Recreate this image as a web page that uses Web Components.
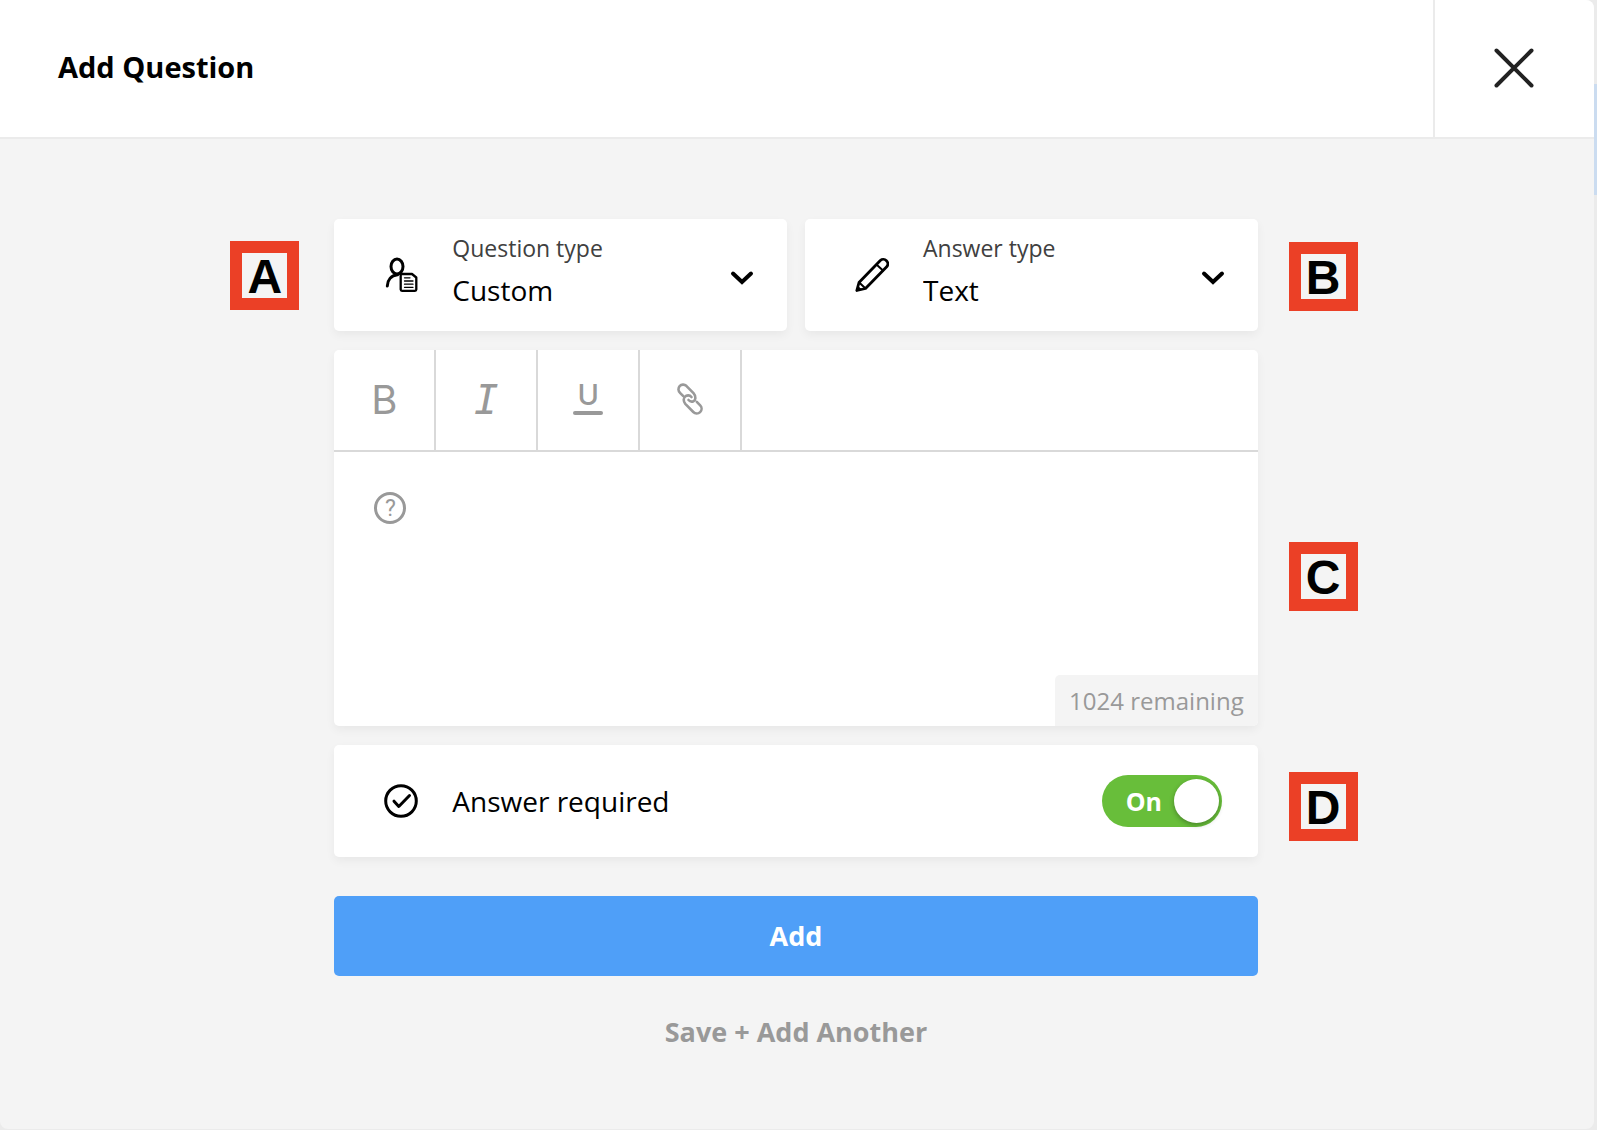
<!DOCTYPE html>
<html lang="en">
<head>
<meta charset="utf-8">
<meta name="viewport" content="width=device-width, initial-scale=1">
<title>Add Question</title>
<style>
  html {
    height: 100%;
  }
  body {
    box-sizing: border-box;
    min-height: 100%;
    margin: 0;
    padding: 0 3px 1px 0;
    display: flex;
    font-family: "Open Sans", "Noto Sans", sans-serif;
    color: #000;
    background: linear-gradient(#cbdcf0, #cbdcf0) right 84px / 3px 111px no-repeat #ebebeb;
  }
</style>
</head>
<body>
  <question-modal heading="Add Question">
    <form-row>
      <select-card icon="person" label="Question type" options="Custom,Standard"></select-card>
      <select-card icon="pencil" label="Answer type" options="Text,Multiple choice"></select-card>
      <call-out slot="left" style="--top: 22px">A</call-out>
      <call-out slot="right" style="--top: 23px">B</call-out>
    </form-row>
    <form-row>
      <text-editor limit="1024"></text-editor>
      <call-out slot="right" style="--top: 192px">C</call-out>
    </form-row>
    <form-row>
      <toggle-card label="Answer required"></toggle-card>
      <call-out slot="right" style="--top: 27px">D</call-out>
    </form-row>
    <form-actions></form-actions>
  </question-modal>

<script>
const icons = {
  close: `<svg width="40" height="40" viewBox="0 0 40 40" fill="none" stroke="#222" stroke-width="4" stroke-linecap="round"><path d="M2.500 2.500 37.500 37.500M37.500 2.500 2.500 37.500"/></svg>`,
  chevron: `<svg width="24" height="16" viewBox="0 0 24 16" fill="none" stroke="currentColor" stroke-width="4" stroke-linecap="round" stroke-linejoin="miter"><path d="M3 3.500 12 12 21 3.500"/></svg>`,
  person: `<svg width="34" height="36" viewBox="0 0 34 36" fill="none" stroke="currentColor" stroke-linecap="round" stroke-linejoin="round"><ellipse cx="13" cy="9.500" rx="6" ry="7.500" stroke-width="3"/><path d="M3.300 29C3.500 23 7 18.500 13.500 17.800" stroke-width="3"/><path d="M17.500 17H28L32.300 20.500V32.500Q32.300 33.800 31 33.800H18Q16.700 33.800 16.700 32.500V18Q16.700 17 17.500 17Z" stroke-width="2.300" fill="#fff"/><path d="M20.500 20.800H26M20.500 24H29M20.500 27.200H29M20.500 30.300H29" stroke-width="1.300"/></svg>`,
  pencil: `<svg width="34" height="36" viewBox="0 0 34 36" fill="none" stroke="currentColor" stroke-width="2.800" stroke-linecap="round" stroke-linejoin="round"><path d="M1.800 33.500 4 25.500 25.300 3.500A4.500 4.500 0 0 1 31.700 9.800L10.500 31.500Z"/><path d="M4.500 25.800 10 31M22 8 28 13.500" stroke-width="2"/><path d="M1.800 33.500 3 29.500 6 32.200Z" fill="currentColor" stroke-width="1"/></svg>`,
  check: `<svg width="34" height="34" viewBox="0 0 34 34" fill="none" stroke="currentColor" stroke-width="3" stroke-linecap="round" stroke-linejoin="round"><circle cx="17" cy="17" r="15.300"/><path d="M10 17.200 14.800 22.500 25.500 11.500"/></svg>`,
  link: `<svg width="26" height="32" viewBox="0 0 26 32" fill="none" stroke="currentColor" stroke-width="2.600" stroke-linecap="round" stroke-linejoin="round"><path d="M6.300 13.200 3 9.800A4.700 4.700 0 0 1 9.300 2.800L16.500 10.200C19.500 13.500 18.500 17.500 16.500 18.200C14.500 19 12.800 18.500 11.500 17"/><path d="M14.500 14C13 12.200 10.500 12 8.500 13.200C6 15 6.300 18.500 8.300 20.800L16.300 29A4.700 4.700 0 0 0 23.200 22.300L19.800 18.800"/></svg>`
}

class QuestionModal extends HTMLElement {
  constructor () {
    super()
    this.attachShadow({ mode: 'open' })
  }

  connectedCallback () {
    this.shadowRoot.innerHTML =
    /*html*/`
    <style>
      :host {
        flex: 1;
        min-width: 0;
        display: flex;
        flex-direction: column;
        overflow: hidden;
        border-radius: 0 8px 8px 8px;
        background: #f4f4f4;
      }
      header {
        display: flex;
        height: 137px;
        background: #fff;
        border-bottom: 2px solid #ebebeb;
      }
      h1 {
        flex: 1;
        align-self: center;
        margin: 0;
        padding: 0 0 4px 58px;
        font-size: 29px;
        line-height: 40px;
        font-weight: 700;
      }
      button {
        display: flex;
        align-items: center;
        justify-content: center;
        box-sizing: border-box;
        width: 161px;
        padding: 0 2px 2px 0;
        border: none;
        border-left: 2px solid #ebebeb;
        background: none;
        cursor: pointer;
      }
      main {
        display: flex;
        flex-direction: column;
        align-items: center;
        gap: 19px;
        padding: 80px 2px 40px 0;
      }
    </style>
    <header>
      <h1>${this.getAttribute('heading')}</h1>
      <button type="button" aria-label="Close">${icons.close}</button>
    </header>
    <main><slot></slot></main>
    `
  }
}

class FormRow extends HTMLElement {
  constructor () {
    super()
    this.attachShadow({ mode: 'open' })
  }

  connectedCallback () {
    this.shadowRoot.innerHTML =
    /*html*/`
    <style>
      :host {
        position: relative;
        display: flex;
        gap: 18px;
        width: 58%;
        min-width: 600px;
      }
      ::slotted(*) {
        flex: 1;
        min-width: 0;
      }
      /* annotation markers hang outside the row */
      ::slotted(call-out) {
        position: absolute;
        top: var(--top);
      }
      ::slotted([slot="left"]) {
        right: 100%;
        margin-right: 35px;
      }
      ::slotted([slot="right"]) {
        left: 100%;
        margin-left: 31px;
      }
    </style>
    <slot name="left"></slot>
    <slot></slot>
    <slot name="right"></slot>
    `
  }
}

class CallOut extends HTMLElement {
  constructor () {
    super()
    this.attachShadow({ mode: 'open' })
  }

  connectedCallback () {
    this.shadowRoot.innerHTML =
    /*html*/`
    <style>
      :host {
        display: flex;
        align-items: center;
        justify-content: center;
        box-sizing: border-box;
        width: 69px;
        height: 69px;
        padding-top: 2px;
        border: 12px solid #eb4026;
        font: 700 48px/48px "Liberation Sans", Arial, sans-serif;
      }
    </style>
    <slot></slot>
    `
  }
}

class SelectCard extends HTMLElement {
  constructor () {
    super()
    this.attachShadow({ mode: 'open' })
  }

  connectedCallback () {
    const options = this.getAttribute('options').split(',')
    this.shadowRoot.innerHTML =
    /*html*/`
    <style>
      :host {
        display: flex;
        align-items: center;
        box-sizing: border-box;
        height: 112px;
        padding: 0 33px 0 50px;
        border-radius: 5px;
        background: #fff;
        box-shadow: 0 4px 10px rgba(0, 0, 0, 0.05);
      }
      .field {
        flex: 1;
        display: flex;
        flex-direction: column;
        padding: 0 0 6px 34px;
      }
      label {
        font-size: 23px;
        line-height: 36px;
        color: #404040;
      }
      select {
        appearance: none;
        height: 48px;
        margin: 0;
        padding: 0;
        border: none;
        background: none;
        font: inherit;
        font-size: 28px;
        color: inherit;
      }
      .chevron {
        display: flex;
        padding-top: 6px;
        pointer-events: none;
      }
    </style>
    ${icons[this.getAttribute('icon')]}
    <div class="field">
      <label for="choice">${this.getAttribute('label')}</label>
      <select id="choice">${options.map(option => `<option>${option}</option>`).join('')}</select>
    </div>
    <span class="chevron">${icons.chevron}</span>
    `
  }
}

class TextEditor extends HTMLElement {
  constructor () {
    super()
    this.attachShadow({ mode: 'open' })
    this.limit = 0
  }

  connectedCallback () {
    this.limit = Number(this.getAttribute('limit'))
    this.render()
  }

  render () {
    this.shadowRoot.innerHTML =
    /*html*/`
    <style>
      :host {
        display: block;
        overflow: hidden;
        border-radius: 5px;
        background: #fff;
        box-shadow: 0 4px 10px rgba(0, 0, 0, 0.05);
        color: #999;
      }
      .toolbar {
        display: flex;
        height: 100px;
        border-bottom: 2px solid #d9d9d9;
      }
      button {
        display: flex;
        flex-direction: column;
        align-items: center;
        justify-content: center;
        width: 102px;
        padding: 0;
        border: none;
        border-right: 2px solid #d9d9d9;
        background: none;
        color: inherit;
        cursor: pointer;
      }
      .bold {
        font: 400 40px/42px Inter, sans-serif;
      }
      .italic {
        font: italic 400 41px/42px "DejaVu Sans Mono", monospace;
      }
      .underline {
        gap: 2px;
        padding-bottom: 6px;
        font: 500 29px/29px Inter, sans-serif;
      }
      .underline::after {
        content: "";
        width: 30px;
        height: 4px;
        border-radius: 2px;
        background: currentColor;
      }
      .link {
        padding-bottom: 2px;
      }
      .body {
        position: relative;
        display: flex;
        align-items: flex-start;
        height: 274px;
      }
      .help {
        flex: none;
        box-sizing: border-box;
        width: 32px;
        height: 32px;
        margin: 40px 0 0 40px;
        border: 3px solid #999;
        border-radius: 50%;
        font: 400 23px/27px Roboto, sans-serif;
        text-align: center;
      }
      textarea {
        flex: 1;
        align-self: stretch;
        padding: 36px 40px 52px 46px;
        border: none;
        outline: none;
        resize: none;
        background: none;
        font: inherit;
        font-size: 28px;
        color: #000;
      }
      .remaining {
        position: absolute;
        right: 0;
        bottom: 0;
        padding: 0 14px;
        border-radius: 5px 0 0 0;
        background: #f4f4f4;
        font-size: 24px;
        line-height: 51px;
      }
    </style>
    <div class="toolbar">
      <button type="button" class="bold" title="Bold">B</button>
      <button type="button" class="italic" title="Italic">I</button>
      <button type="button" class="underline" title="Underline">U</button>
      <button type="button" class="link" title="Link">${icons.link}</button>
    </div>
    <div class="body">
      <label class="help" for="question">?</label>
      <textarea id="question" maxlength="${this.limit}"></textarea>
      <span class="remaining">${this.limit} remaining</span>
    </div>
    `
    const textarea = this.shadowRoot.querySelector('textarea')
    textarea.addEventListener('input', () => {
      this.shadowRoot.querySelector('.remaining').textContent = `${this.limit - textarea.value.length} remaining`
    })
  }
}

class ToggleCard extends HTMLElement {
  constructor () {
    super()
    this.attachShadow({ mode: 'open' })
  }

  connectedCallback () {
    this.shadowRoot.innerHTML =
    /*html*/`
    <style>
      :host {
        display: flex;
        align-items: center;
        box-sizing: border-box;
        height: 112px;
        padding: 0 36px 0 50px;
        border-radius: 5px;
        background: #fff;
        box-shadow: 0 4px 10px rgba(0, 0, 0, 0.05);
      }
      label {
        flex: 1;
        padding-left: 34px;
        font-size: 28px;
        line-height: 40px;
      }
      .switch {
        display: grid;
        align-items: center;
      }
      .switch > * {
        grid-area: 1 / 1;
      }
      input {
        appearance: none;
        display: flex;
        align-items: center;
        box-sizing: border-box;
        width: 120px;
        height: 52px;
        margin: 0;
        padding: 0 3px;
        border-radius: 26px;
        background: #999;
        cursor: pointer;
      }
      input::before {
        content: "";
        width: 45px;
        height: 44px;
        border-radius: 50%;
        background: #fff;
        box-shadow: 0 2px 5px rgba(0, 0, 0, 0.3);
      }
      input:checked {
        justify-content: flex-end;
        background: #68be3a;
      }
      .state {
        padding-left: 24px;
        font-size: 25px;
        line-height: 52px;
        font-weight: 700;
        color: #fff;
        pointer-events: none;
      }
    </style>
    ${icons.check}
    <label for="toggle">${this.getAttribute('label')}</label>
    <div class="switch">
      <input id="toggle" type="checkbox" role="switch" checked>
      <span class="state">On</span>
    </div>
    `
    const toggle = this.shadowRoot.querySelector('input')
    const state = this.shadowRoot.querySelector('.state')
    toggle.addEventListener('change', () => {
      state.textContent = toggle.checked ? 'On' : 'Off'
      state.style.textAlign = toggle.checked ? 'left' : 'center'
    })
  }
}

class FormActions extends HTMLElement {
  constructor () {
    super()
    this.attachShadow({ mode: 'open' })
  }

  connectedCallback () {
    this.shadowRoot.innerHTML =
    /*html*/`
    <style>
      :host {
        display: flex;
        flex-direction: column;
        align-items: center;
        gap: 36px;
        width: 58%;
        min-width: 600px;
        padding-top: 20px;
      }
      button {
        padding: 0;
        border: none;
        background: none;
        font: inherit;
        font-size: 27px;
        line-height: 40px;
        font-weight: 700;
        color: #999;
        cursor: pointer;
      }
      .add {
        width: 100%;
        height: 80px;
        border-radius: 5px;
        background: #4f9ff8;
        color: #fff;
      }
    </style>
    <button type="submit" class="add">Add</button>
    <button type="button">Save + Add Another</button>
    `
  }
}

customElements.define('question-modal', QuestionModal)
customElements.define('form-row', FormRow)
customElements.define('call-out', CallOut)
customElements.define('select-card', SelectCard)
customElements.define('text-editor', TextEditor)
customElements.define('toggle-card', ToggleCard)
customElements.define('form-actions', FormActions)
</script>
</body>
</html>
